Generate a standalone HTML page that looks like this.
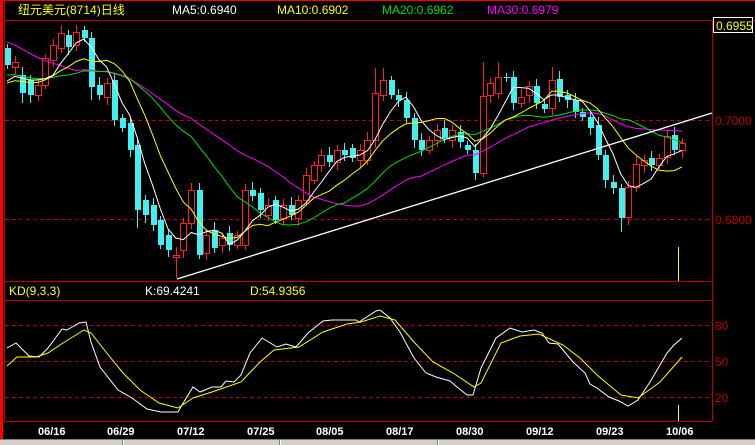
<!DOCTYPE html>
<html><head><meta charset="utf-8"><style>
html,body{margin:0;padding:0;background:#000;width:755px;height:445px;overflow:hidden}
svg{display:block}
text{font-family:"Liberation Sans","Noto Sans CJK SC",sans-serif}
</style></head><body>
<svg id="s" width="755" height="445" xmlns="http://www.w3.org/2000/svg">
<rect width="755" height="445" fill="#000"/>
<rect x="0" y="0" width="3" height="440" fill="#ff0000"/>
<rect x="0" y="0" width="755" height="1" fill="#ff0000"/>
<line x1="4.5" y1="0" x2="4.5" y2="421" stroke="#c00000"/>
<line x1="0" y1="20.5" x2="755" y2="20.5" stroke="#c00000"/>
<line x1="4" y1="281.5" x2="712" y2="281.5" stroke="#c00000"/>
<line x1="4" y1="300.5" x2="712" y2="300.5" stroke="#c00000"/>
<line x1="4" y1="421.5" x2="712" y2="421.5" stroke="#c00000"/>
<line x1="712.5" y1="20" x2="712.5" y2="421" stroke="#c00000"/>
<g stroke="#c00000" stroke-dasharray="4,3">
<line x1="5" y1="120.5" x2="712" y2="120.5"/><line x1="5" y1="219.5" x2="712" y2="219.5"/>
<line x1="5" y1="325.5" x2="712" y2="325.5"/><line x1="5" y1="361.5" x2="712" y2="361.5"/><line x1="5" y1="397.5" x2="712" y2="397.5"/>
</g>
<g font-size="12" fill="#c00000">
<text x="715" y="125">0.7000</text><text x="715" y="224">0.6800</text>
<text x="715" y="330">80</text><text x="715" y="366">50</text><text x="715" y="402">20</text>
</g>
<rect x="713.5" y="17.5" width="39" height="15" fill="#000" stroke="#fff"/>
<text x="716" y="30" font-size="12" fill="#ffff00">0.6955</text>
<g font-size="12">
<text x="18" y="14" fill="#ffff00">纽元美元(8714)日线</text>
<text x="172" y="14" fill="#fff">MA5:0.6940</text>
<text x="277" y="14" fill="#ffff00">MA10:0.6902</text>
<text x="382" y="14" fill="#00e000">MA20:0.6962</text>
<text x="487" y="14" fill="#ff00ff">MA30:0.6979</text>
<text x="9" y="295" fill="#ffff00">KD(9,3,3)</text>
<text x="145" y="295" fill="#fff">K:69.4241</text>
<text x="250" y="295" fill="#ffff00">D:54.9356</text>
</g>
<g font-size="11" font-weight="bold" fill="#fff">
<text x="38" y="435">06/16</text><text x="107" y="435">06/29</text><text x="177" y="435">07/12</text>
<text x="247" y="435">07/25</text><text x="316" y="435">08/05</text><text x="386" y="435">08/17</text>
<text x="456" y="435">08/30</text><text x="526" y="435">09/12</text><text x="596" y="435">09/23</text><text x="666" y="435">10/06</text>
</g>
<rect x="0" y="439" width="755" height="6" fill="#d4d0c8"/>
<line x1="0" y1="439.5" x2="755" y2="439.5" stroke="#808080"/>
<g stroke="#808080"><line x1="122.5" y1="440" x2="122.5" y2="445"/><line x1="279.5" y1="440" x2="279.5" y2="445"/><line x1="437.5" y1="440" x2="437.5" y2="445"/></g>
<g stroke="#fff"><line x1="123.5" y1="440" x2="123.5" y2="445"/><line x1="280.5" y1="440" x2="280.5" y2="445"/><line x1="438.5" y1="440" x2="438.5" y2="445"/></g>
<line x1="678.5" y1="247" x2="678.5" y2="281" stroke="#ffff00"/>
<line x1="678.5" y1="405" x2="678.5" y2="421" stroke="#ffff00"/>
<g id="c"></g>
</svg>
<script>
var C=[[48,65],[67,62],[75,93],[80,95],[95,85],[85,58],[60,45],[48,33],[35,47],[45,32],[30,38],[38,87],[85,95],[97,83],[80,120],[118,128],[123,150],[145,210],[200,215],[205,225],[220,245],[235,250],[257,255],[250,223],[223,190],[190,255],[253,235],[230,248],[245,238],[233,245],[245,235],[245,190],[190,196],[193,210],[215,205],[200,220],[218,205],[205,215],[218,200],[200,175],[180,165],[165,155],[155,162],[162,150],[150,155],[148,158],[160,150],[160,140],[140,93],[95,80],[80,95],[95,100],[100,118],[118,140],[140,150],[150,140],[140,130],[128,138],[140,130],[132,142],[145,150],[150,173],[173,96],[95,83],[93,77],[77,78],[77,103],[103,97],[95,86],[86,103],[104,109],[108,80],[79,97],[95,100],[100,112],[112,117],[117,128],[125,155],[155,180],[182,188],[188,218],[217,187],[187,164],[165,160],[158,165],[165,158],[157,136],[135,150],[150,143]];
var W={7:[25,0],17:[0,228],22:[0,278],25:[183,0],31:[0,250],48:[68,0],49:[68,0],62:[62,0],64:[62,0],71:[67,0],80:[0,232],81:[0,225],2:[0,103],11:[0,100]};
var NS="http://www.w3.org/2000/svg",g=document.getElementById("c"),h="";
function X(i){return 7+i*7.67;}
var pre=[];for(var k=0;k<10;k++)pre.push(-35);for(k=0;k<10;k++)pre.push(65);for(k=0;k<10;k++)pre.push(85);
var all=pre.concat(C.map(function(a){return a[1];}));
function ma(n){var p=[];for(var i=0;i<C.length;i++){var s=0;for(var j=0;j<n;j++)s+=all[i+30-j];p.push(X(i).toFixed(1)+","+(s/n).toFixed(1));}return p.join(" ");}
for(var i=0;i<C.length;i++){var o=C[i][0],c=C[i][1],x=X(i),t=Math.min(o,c),b=Math.max(o,c);
var hi=t-4-(i*7%5),lo=b+4+(i*3%5);if(W[i]){if(W[i][0])hi=W[i][0];if(W[i][1])lo=W[i][1];}
var xr=Math.round(x);
if(c<o){h+='<line x1="'+(xr+.5)+'" y1="'+hi+'" x2="'+(xr+.5)+'" y2="'+t+'" stroke="#ff2020"/><line x1="'+(xr+.5)+'" y1="'+b+'" x2="'+(xr+.5)+'" y2="'+lo+'" stroke="#ff2020"/><rect x="'+(xr-2.5)+'" y="'+(t+.5)+'" width="6" height="'+Math.max(b-t,1)+'" fill="#000" stroke="#ff2020"/>';}
else{h+='<line x1="'+(xr+.5)+'" y1="'+hi+'" x2="'+(xr+.5)+'" y2="'+lo+'" stroke="#40f0f0"/><rect x="'+(xr-2)+'" y="'+t+'" width="6" height="'+Math.max(b-t,1)+'" fill="#40f0f0"/>';}}
h+='<polyline points="'+ma(30)+'" fill="none" stroke="#ff00ff"/>';
h+='<polyline points="'+ma(20)+'" fill="none" stroke="#00e000"/>';
h+='<polyline points="'+ma(10)+'" fill="none" stroke="#ffff00"/>';
h+='<polyline points="'+ma(5)+'" fill="none" stroke="#ffffff"/>';
h+='<line x1="177" y1="279" x2="712" y2="113" stroke="#fff" stroke-width="1.3"/>';
var K="7,348 16,343 29,356 39,357 48,348 62,329 67,330 79,323 86,322 91,342 100,367 118,390 132,398 147,409 161,412 178,412 182,405 193,387 200,392 212,387 221,387 226,381 234,382 241,375 250,353 262,338 277,347 286,344 296,347 308,333 323,321 332,320 356,320 359,322 376,311 380,310 390,318 400,332 414,358 426,373 436,377 450,381 457,387 467,395 473,395 481,368 496,338 510,328 522,332 534,330 542,333 549,343 558,344 573,362 585,373 590,384 597,388 609,397 619,401 628,406 638,400 650,382 667,353 674,345 682,338";
var D="7,366 17,357 36,357 48,353 63,343 84,330 91,333 106,352 123,373 140,390 159,403 178,408 193,398 212,392 241,382 260,362 274,350 299,347 323,332 347,324 361,322 380,316 395,320 414,342 433,362 453,373 474,387 481,383 501,343 520,336 539,334 563,345 580,358 597,375 621,395 638,398 660,382 682,357";
h+='<polyline points="'+K+'" fill="none" stroke="#fff"/><polyline points="'+D+'" fill="none" stroke="#ffff00"/>';
g.innerHTML=h;
</script>
</body></html>
